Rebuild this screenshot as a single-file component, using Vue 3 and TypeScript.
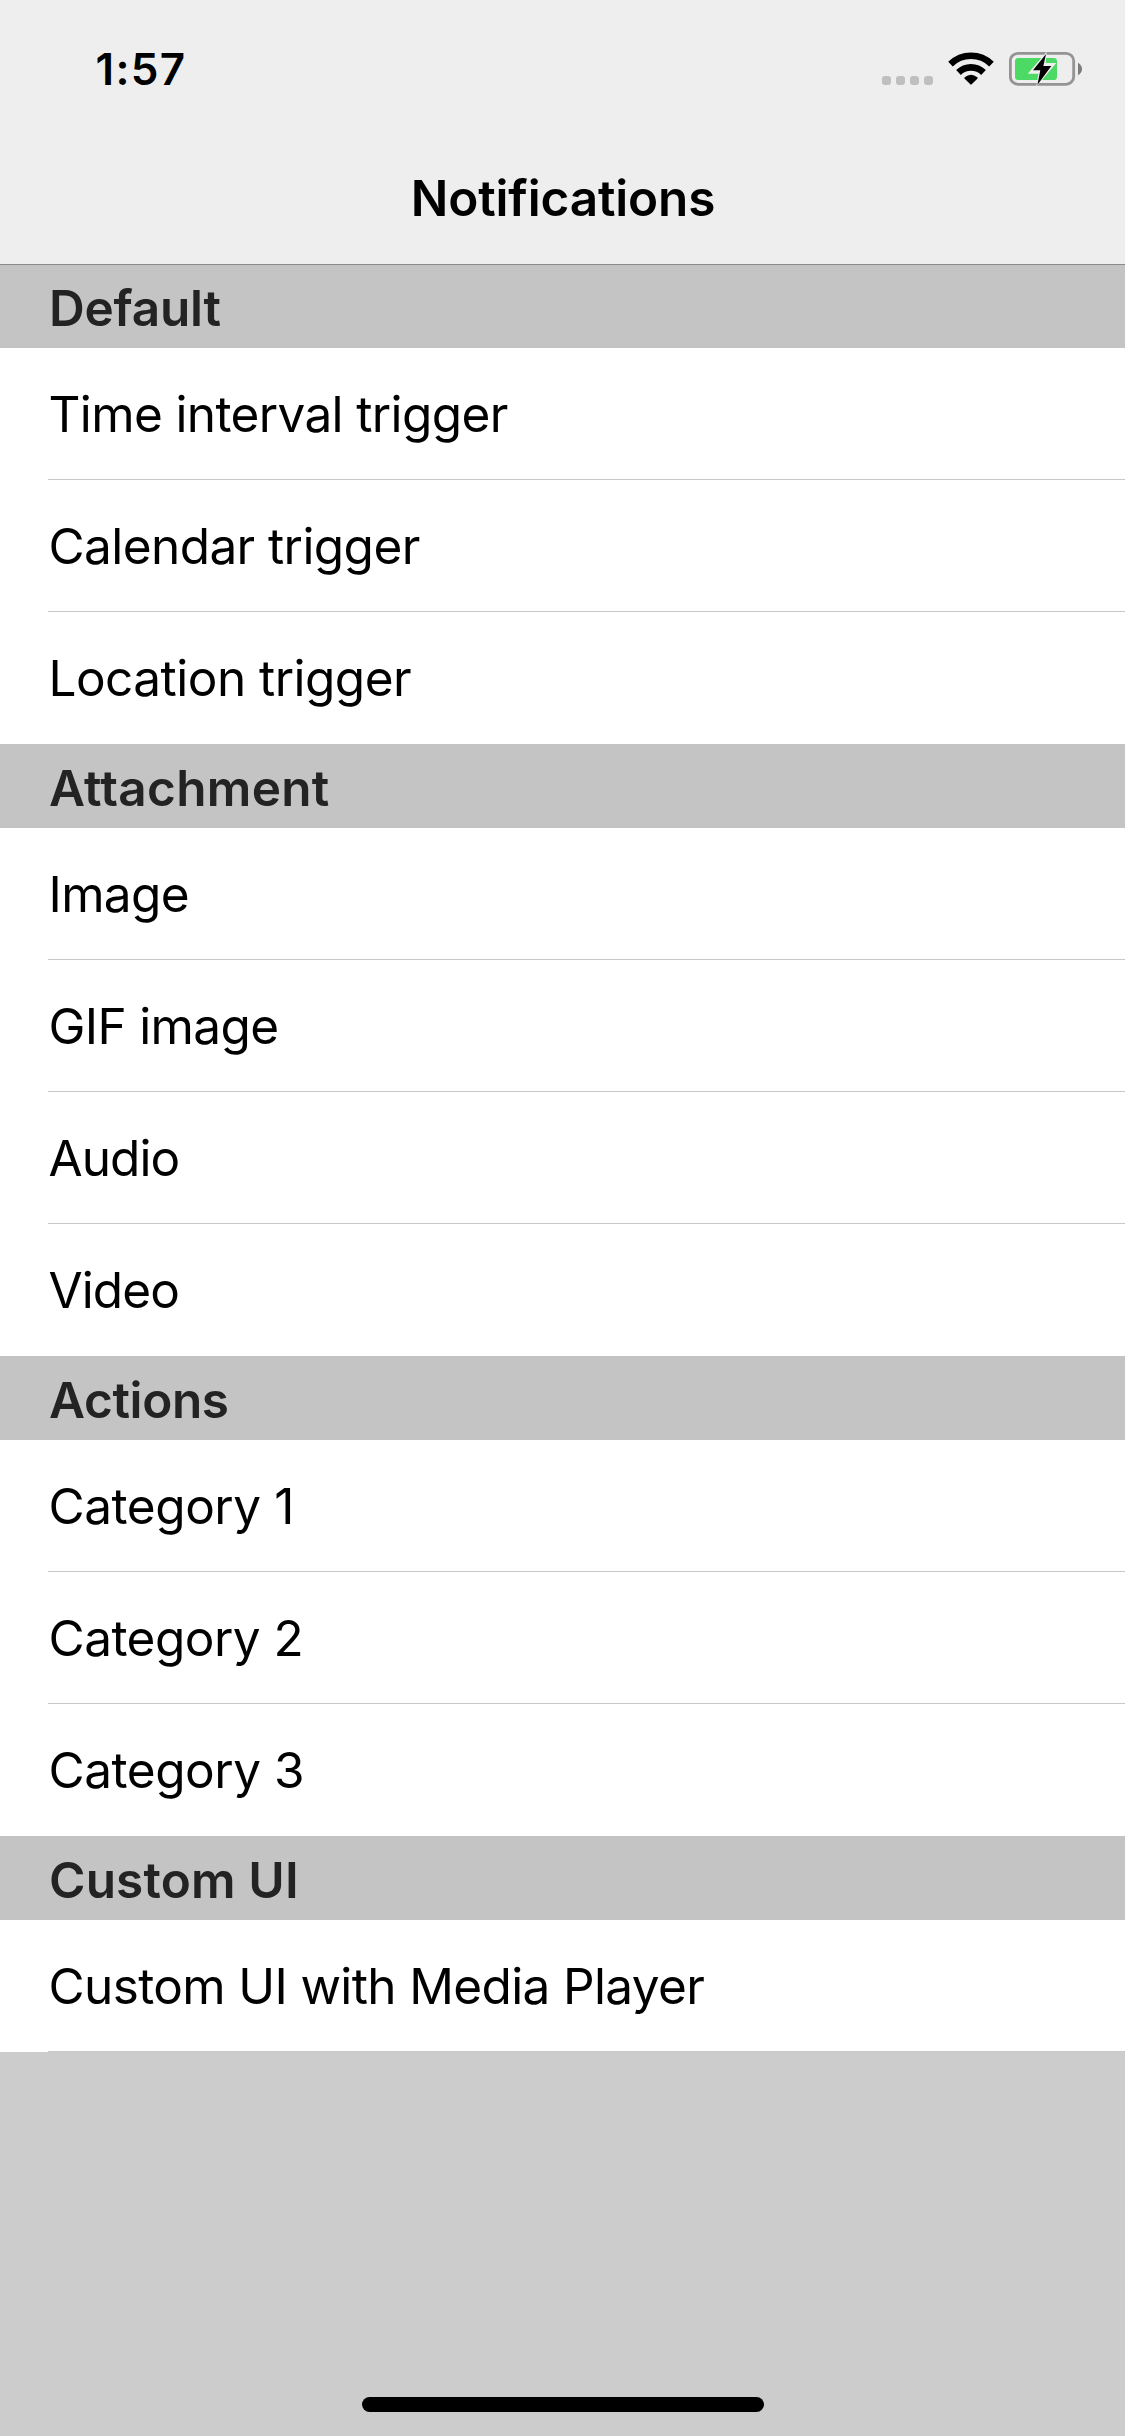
<script setup lang="ts">
interface Label {
  text: string
  tracking: number
}

interface Section {
  header: Label
  rows: Label[]
}

const sections: Section[] = [
  {
    header: { text: 'Default', tracking: -0.2 },
    rows: [
      { text: 'Time interval trigger', tracking: -0.63 },
      { text: 'Calendar trigger', tracking: -0.58 },
      { text: 'Location trigger', tracking: -0.53 },
    ],
  },
  {
    header: { text: 'Attachment', tracking: 0.3 },
    rows: [
      { text: 'Image', tracking: -0.65 },
      { text: 'GIF image', tracking: -0.65 },
      { text: 'Audio', tracking: -0.95 },
      { text: 'Video', tracking: -0.9 },
    ],
  },
  {
    header: { text: 'Actions', tracking: -0.35 },
    rows: [
      { text: 'Category 1', tracking: -0.45 },
      { text: 'Category 2', tracking: -0.52 },
      { text: 'Category 3', tracking: -0.47 },
    ],
  },
  {
    header: { text: 'Custom UI', tracking: 0.17 },
    rows: [{ text: 'Custom UI with Media Player', tracking: -0.63 }],
  },
]
</script>

<template>
  <div class="screen">
    <header class="top">
      <div class="status">
        <span class="time">1:57</span>
        <div class="indicators">
          <div class="signal"><i v-for="n in 4" :key="n"></i></div>
          <svg class="wifi" width="46" height="33" viewBox="264 66 138 99">
            <g fill="none" stroke="#000">
              <path d="M271.5 102.5A88 88 0 0 1 394.5 102.5" stroke-width="19.5" />
              <path d="M295.5 127.5A53.5 53.5 0 0 1 370.5 127.5" stroke-width="20" />
            </g>
            <path d="M314 142Q333 126 352 142Q354 144 352 146L335 163Q333 165 331 163L314 146Q312 144 314 142Z" />
          </svg>
          <svg class="battery" width="75" height="36" viewBox="447 63 225 108">
            <rect x="451" y="70" width="190" height="93" rx="23" fill="none" stroke="#949494" stroke-width="8.5" />
            <rect x="465" y="84" width="126" height="66" rx="10" fill="#4cd964" />
            <path d="M654 98Q666 105 666 117Q666 129 654 136Z" fill="#7c7c7c" />
            <path d="M560 65L503 131H535L529 170L589 99H557Z" fill="#eee" />
            <path d="M558 72L519 121H541L532 165L574 108H550Z" fill="#000" />
          </svg>
        </div>
      </div>
      <h1 class="title">Notifications</h1>
    </header>

    <main>
      <section v-for="section in sections" :key="section.header.text">
        <h2 class="section-header" :style="{ letterSpacing: section.header.tracking + 'px' }">
          {{ section.header.text }}
        </h2>
        <ul class="rows">
          <li
            v-for="row in section.rows"
            :key="row.text"
            class="row"
            :style="{ letterSpacing: row.tracking + 'px' }"
          >
            <span class="row-label">{{ row.text }}</span>
          </li>
        </ul>
      </section>
    </main>

    <div class="home-indicator"></div>
  </div>
</template>

<style>
body {
  margin: 0;
  background: #ccc;
}
</style>

<style scoped>
.screen {
  box-sizing: border-box;
  display: flex;
  flex-direction: column;
  width: 1125px;
  height: 2436px;
  overflow: hidden;
  background: #ccc;
  font-family: Inter, "Liberation Sans", sans-serif;
  font-size: 49.5px;
  color: #000;
}

.top {
  height: 264px;
  background: #eee;
}

.status {
  display: flex;
  justify-content: space-between;
  height: 132px;
  box-sizing: border-box;
  padding: 0 41px 0 95.5px;
}

.time {
  font-size: 44px;
  font-weight: 600;
  line-height: 138px;
  letter-spacing: 1.3px;
}

.indicators {
  display: flex;
  align-items: flex-start;
  padding-top: 51px;
}

.signal {
  display: flex;
  gap: 5px;
  margin: 25px 15px 0 0;
}

.signal i {
  width: 9px;
  height: 9px;
  border-radius: 3px;
  background: #bfbfbf;
}

.wifi {
  display: block;
  margin-top: 1px;
  margin-right: 15px;
}

.battery {
  display: block;
}

.title {
  margin: 0;
  font-size: 49.5px;
  font-weight: 600;
  line-height: 132px;
  letter-spacing: -0.15px;
  text-indent: 1px;
  text-align: center;
}

.section-header {
  box-sizing: border-box;
  height: 84px;
  margin: 0;
  padding: 4px 49px 0;
  background: #c4c4c4;
  color: #232323;
  font-size: 49.5px;
  font-weight: 600;
  line-height: 80px;
}

section:first-child .section-header {
  box-shadow: inset 0 1px #8a8a8a;
}

.rows {
  margin: 0;
  padding: 0;
  list-style: none;
}

.row {
  display: flex;
  height: 132px;
  padding-left: 48px;
  background: #fff;
}

.row-label {
  box-sizing: border-box;
  flex: 1;
  padding-left: 0.5px;
  border-bottom: 1px solid #c8c8c8;
  line-height: 132px;
  white-space: nowrap;
}

/* A row directly above the next section header has no separator. */
section:not(:last-child) .row:last-child .row-label {
  border-bottom-color: transparent;
}

.home-indicator {
  width: 402px;
  height: 15px;
  margin: auto auto 24px;
  border-radius: 8px;
  background: #000;
}
</style>
